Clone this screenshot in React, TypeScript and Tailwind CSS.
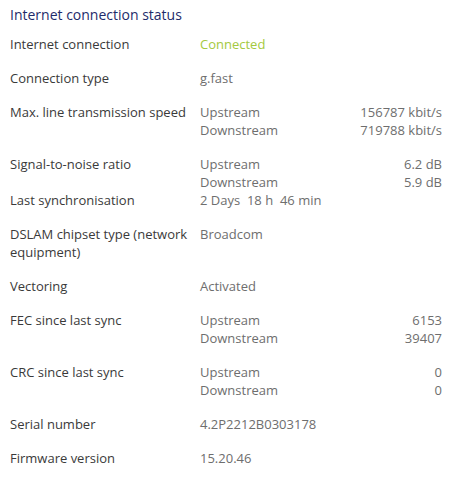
import React from 'react'

type Pair = { dir: string, value: string }

type Row = {
  label: string,
  value?: string,
  pairs?: Pair[],
  green?: boolean,
  gap?: boolean,
}

const rows: Row[] = [
  { label: "Internet connection", value: "Connected", green: true },
  { label: "Connection type", value: "g.fast" },
  { label: "Max. line transmission speed", pairs: [
    { dir: "Upstream", value: "156787 kbit/s" },
    { dir: "Downstream", value: "719788 kbit/s" },
  ] },
  { label: "Signal-to-noise ratio", gap: false, pairs: [
    { dir: "Upstream", value: "6.2 dB" },
    { dir: "Downstream", value: "5.9 dB" },
  ] },
  { label: "Last synchronisation", value: "2 Days\u00a0 18 h\u00a0 46 min" },
  { label: "DSLAM chipset type (network equipment)", value: "Broadcom" },
  { label: "Vectoring", value: "Activated" },
  { label: "FEC since last sync", pairs: [
    { dir: "Upstream", value: "6153" },
    { dir: "Downstream", value: "39407" },
  ] },
  { label: "CRC since last sync", pairs: [
    { dir: "Upstream", value: "0" },
    { dir: "Downstream", value: "0" },
  ] },
  { label: "Serial number", value: "4.2P2212B0303178" },
  { label: "Firmware version", value: "15.20.46" },
]

export default function App() {
  return (
    <div className="w-[456px] h-[478px] bg-white pl-[10px] pr-[14px] pt-[5px]"
      style={{ fontFamily: '"Open Sans", sans-serif' }}>
      <h1 className="text-[14px] leading-[20px] text-[#1e2b6b] mb-[10px]">Internet connection status</h1>
      <div className="flex flex-col">
        {rows.map(row => <StatusRow key={row.label} row={row} />)}
      </div>
    </div>
  )
}

function StatusRow({ row }: { row: Row }) {
  const gap = row.gap === false ? "" : "pb-[16px]"
  return (
    <div className={"flex text-[13px] leading-[18px] " + gap}>
      <div className="w-[190px] shrink-0 text-[#3a3a3a] pr-2">{row.label}</div>
      {row.pairs ? (
        <div className="flex-1 flex flex-col text-[#6e6e6e]">
          {row.pairs.map(p =>
            <div key={p.dir} className="flex justify-between">
              <span>{p.dir}</span>
              <span>{p.value}</span>
            </div>
          )}
        </div>
      ) : (
        <div className={"flex-1 whitespace-pre " + (row.green ? "text-[#a4c940]" : "text-[#6e6e6e]")}>
          {row.value}
        </div>
      )}
    </div>
  )
}
